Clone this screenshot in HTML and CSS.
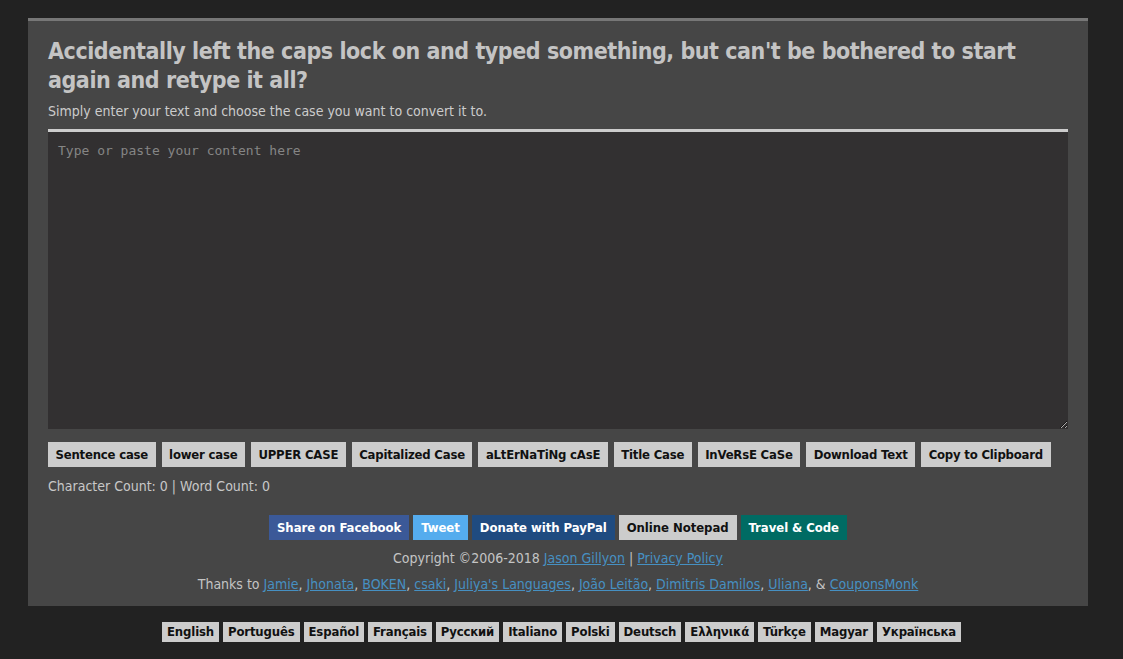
FILE: index.html
```html
<!DOCTYPE html>
<html lang="en">
<head>
<meta charset="utf-8">
<title>Convert Case</title>
<link rel="stylesheet" href="styles.css">
</head>
<body>
<div class="container">
  <h1 class="title">Accidentally left the caps lock on and typed something, but can't be bothered to start again and retype it all?</h1>
  <p class="lead">Simply enter your text and choose the case you want to convert it to.</p>
  <textarea class="content" placeholder="Type or paste your content here"></textarea>
  <div class="actions">
    <button class="btn">Sentence case</button>
    <button class="btn">lower case</button>
    <button class="btn">UPPER CASE</button>
    <button class="btn">Capitalized Case</button>
    <button class="btn">aLtErNaTiNg cAsE</button>
    <button class="btn">Title Case</button>
    <button class="btn">InVeRsE CaSe</button>
    <button class="btn">Download Text</button>
    <button class="btn">Copy to Clipboard</button>
  </div>
  <p class="count">Character Count: 0 | Word Count: 0</p>
  <div class="share">
    <a class="sbtn fb">Share on Facebook</a>
    <a class="sbtn tw">Tweet</a>
    <a class="sbtn pp">Donate with PayPal</a>
    <a class="sbtn np">Online Notepad</a>
    <a class="sbtn tc">Travel &amp; Code</a>
  </div>
  <p class="copy">Copyright ©2006-2018 <a href="#">Jason Gillyon</a> | <a href="#">Privacy Policy</a></p>
  <p class="thanks">Thanks to <a href="#">Jamie</a>, <a href="#">Jhonata</a>, <a href="#">BOKEN</a>, <a href="#">csaki</a>, <a href="#">Juliya's Languages</a>, <a href="#">João Leitão</a>, <a href="#">Dimitris Damilos</a>, <a href="#">Uliana</a>, &amp; <a href="#">CouponsMonk</a></p>
</div>
<div class="langs">
  <a class="lang">English</a>
  <a class="lang">Português</a>
  <a class="lang">Español</a>
  <a class="lang">Français</a>
  <a class="lang">Русский</a>
  <a class="lang">Italiano</a>
  <a class="lang">Polski</a>
  <a class="lang">Deutsch</a>
  <a class="lang">Ελληνικά</a>
  <a class="lang">Türkçe</a>
  <a class="lang">Magyar</a>
  <a class="lang">Українська</a>
</div>
</body>
</html>
```
FILE: styles.css
```css
html, body {
  margin: 0;
  padding: 0;
  background: #222222;
}
body {
  padding-top: 18px;
  font-family: "DejaVu Sans Condensed", "DejaVu Sans", sans-serif;
  color: #cccccc;
}
.container {
  width: 1020px;
  margin-left: 28px;
  background: #464646;
  border-top: 3px solid #777777;
  padding: 16px 20px 13px;
}
.title {
  margin: 0;
  font-size: 23px;
  line-height: 29px;
  letter-spacing: -0.45px;
  font-weight: bold;
  color: #c4c4c4;
}
.lead {
  margin: 7px 0 9px;
  font-size: 14px;
  line-height: 18px;
  color: #cccccc;
}
.content {
  display: block;
  box-sizing: border-box;
  width: 1020px;
  height: 300px;
  margin: 0;
  padding: 11px 10px;
  background: #323031;
  border: 0;
  border-top: 3px solid #cccccc;
  font-family: "DejaVu Sans Mono", monospace;
  font-size: 13px;
  line-height: 16px;
  color: #dddddd;
  resize: vertical;
}
.content::placeholder {
  color: #858585;
}
.actions {
  display: flex;
  flex-wrap: wrap;
  gap: 6px;
  margin-top: 13px;
}
.btn {
  height: 25px;
  padding: 0 7.5px;
  border: 0;
  background: #cccccc;
  color: #111111;
  font-family: "DejaVu Sans Condensed", "DejaVu Sans", sans-serif;
  font-size: 13px;
  font-weight: bold;
  letter-spacing: -0.2px;
}
.count {
  margin: 10px 0 0;
  font-size: 14px;
  line-height: 18px;
  color: #c8c8c8;
}
.share {
  display: flex;
  justify-content: center;
  gap: 4px;
  margin-top: 20px;
}
.sbtn {
  display: block;
  height: 25px;
  line-height: 25px;
  padding: 0 8px;
  font-size: 13px;
  font-weight: bold;
  letter-spacing: -0.05px;
  color: #ffffff;
}
.fb { background: #3b5998; }
.tw { background: #55acee; }
.pp { background: #1f4b80; }
.np { background: #cccccc; color: #111111; }
.tc { background: #006b63; }
.copy, .thanks {
  text-align: center;
  font-size: 14px;
  line-height: 18px;
  color: #c4c4c4;
}
.copy { margin: 9px 0 0; }
.thanks { margin: 8px 0 0; }
.copy a, .thanks a {
  color: #4690c2;
  text-decoration: underline;
}
.langs {
  display: flex;
  justify-content: center;
  gap: 4px;
  margin-top: 16px;
}
.lang {
  display: block;
  height: 20px;
  line-height: 20px;
  padding: 0 5px;
  background: #cccccc;
  color: #111111;
  font-size: 13px;
  font-weight: bold;
  letter-spacing: -0.15px;
}
```
